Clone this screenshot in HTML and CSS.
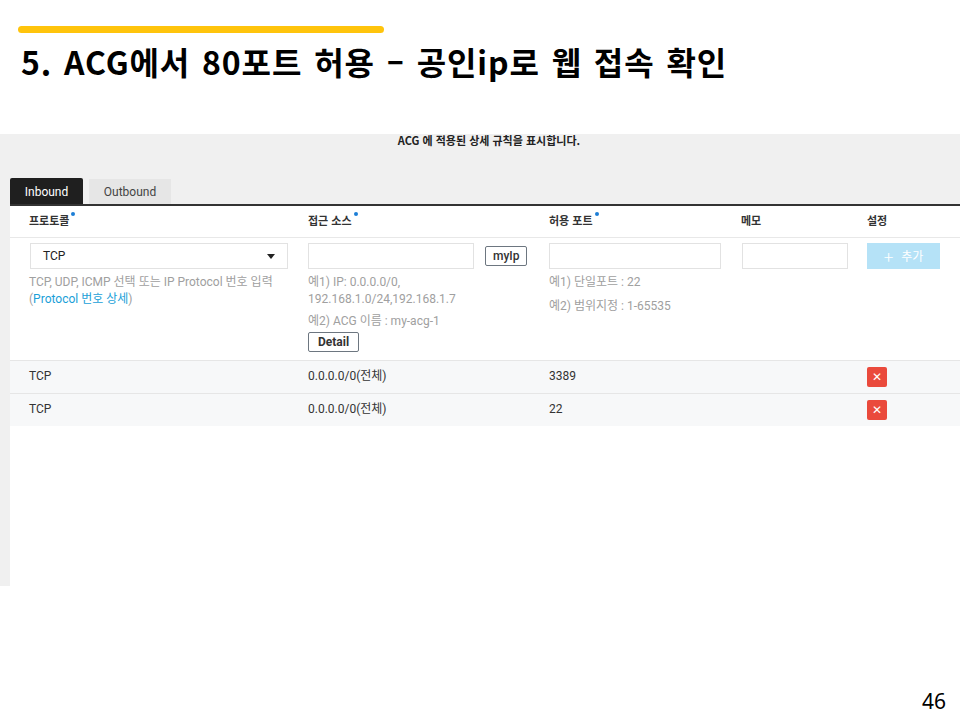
FILE: index.html
```html
<!DOCTYPE html>
<html lang="ko">
<head>
<meta charset="utf-8">
<link rel="stylesheet" href="styles.css">
</head>
<body>
<div class="slide">
  <div class="accent"></div>
  <h1 class="title">5. ACG에서 80포트 허용 – 공인ip로 웹 접속 확인</h1>
  <div class="shot">
    <div class="caption">ACG 에 적용된 상세 규칙을 표시합니다.</div>
    <div class="tabs">
      <div class="tab active">Inbound</div>
      <div class="tab">Outbound</div>
    </div>
    <div class="panel">
      <div class="row head">
        <div class="cell"><span class="req">프로토콜</span></div>
        <div class="cell"><span class="req">접근 소스</span></div>
        <div class="cell"><span class="req">허용 포트</span></div>
        <div class="cell">메모</div>
        <div class="cell">설정</div>
      </div>
      <div class="row form">
        <div class="cell">
          <div class="select"><span>TCP</span><span class="caret"></span></div>
          <p class="help first">TCP, UDP, ICMP 선택 또는 IP Protocol 번호 입력<br>(<span class="link">Protocol 번호 상세</span>)</p>
        </div>
        <div class="cell">
          <div class="inline">
            <div class="input src"></div>
            <div class="btn-small">myIp</div>
          </div>
          <p class="help first">예1) IP: 0.0.0.0/0,<br>192.168.1.0/24,192.168.1.7</p>
          <p class="help second">예2) ACG 이름 : my-acg-1</p>
          <div class="btn-small detail">Detail</div>
        </div>
        <div class="cell">
          <div class="input port"></div>
          <p class="help first">예1) 단일포트 : 22</p>
          <p class="help third">예2) 범위지정 : 1-65535</p>
        </div>
        <div class="cell">
          <div class="input memo"></div>
        </div>
        <div class="cell">
          <div class="btn-add"><span class="plus">+</span>추가</div>
        </div>
      </div>
      <div class="row data">
        <div class="cell">TCP</div>
        <div class="cell">0.0.0.0/0(전체)</div>
        <div class="cell">3389</div>
        <div class="cell"></div>
        <div class="cell"><span class="del">✕</span></div>
      </div>
      <div class="row data">
        <div class="cell">TCP</div>
        <div class="cell">0.0.0.0/0(전체)</div>
        <div class="cell">22</div>
        <div class="cell"></div>
        <div class="cell"><span class="del">✕</span></div>
      </div>
    </div>
  </div>
  <div class="footer">46</div>
</div>
</body>
</html>
```
FILE: styles.css
```css
* { box-sizing: border-box; }
html, body { margin: 0; padding: 0; background: #fff; }
.slide {
  width: 960px;
  height: 720px;
  overflow: hidden;
  font-family: "Noto Sans CJK KR", "Noto Sans", sans-serif;
}
.accent {
  margin: 26px 0 0 18px;
  width: 366px;
  height: 7px;
  border-radius: 4px;
  background: #ffc40c;
}
.title {
  margin: 6px 0 0 21px;
  font-size: 32px;
  line-height: 44px;
  font-weight: 700;
  color: #000;
  letter-spacing: 0.9px;
  word-spacing: 2px;
}
.shot {
  margin-top: 51px;
  height: 452px;
  background: #f0f0f0;
  padding-left: 10px;
  display: flex;
  flex-direction: column;
  font-family: Roboto, "Noto Sans CJK KR", sans-serif;
}
.caption {
  text-align: center;
  font-size: 11px;
  font-weight: 700;
  color: #222;
  line-height: 12px;
  padding-left: 8px;
  font-family: "Noto Sans CJK KR", sans-serif;
}
.tabs {
  margin-top: 32px;
  display: flex;
  gap: 6px;
  align-items: flex-end;
  border-bottom: 2px solid #333;
}
.tab {
  height: 25px;
  line-height: 26px;
  font-size: 12px;
  color: #444;
  background: #e6e6e6;
  padding: 0 14px;
  width: 82px;
  text-align: center;
}
.tab.active {
  background: #1f1f1f;
  color: #fff;
  width: 73px;
  height: 26px;
  line-height: 28px;
  border-radius: 2px 2px 0 0;
}
.panel {
  flex: 1;
  background: #fff;
}
.row {
  display: grid;
  grid-template-columns: 279px 241px 192px 126px 1fr;
  padding-left: 19px;
}
.cell { line-height: 16px; }
.row.head {
  height: 32px;
  align-items: center;
  padding-bottom: 3px;
  border-bottom: 1px solid #e8e8e8;
  font-size: 11px;
  font-weight: 700;
  color: #333;
  font-family: "Noto Sans CJK KR", sans-serif;
}
.req { position: relative; }
.req::after {
  content: "";
  position: absolute;
  right: -6px;
  top: 0px;
  width: 4px;
  height: 4px;
  border-radius: 50%;
  background: #1c7ed6;
}
.row.form {
  height: 123px;
  padding-top: 5px;
  border-bottom: 1px solid #e6e6e6;
}
.select {
  width: 258px;
  height: 26px;
  border: 1px solid #e2e2e2;
  display: flex;
  align-items: center;
  justify-content: space-between;
  padding: 0 12px 0 12px;
  font-size: 12px;
  color: #222;
  margin-left: 1px;
}
.caret {
  width: 0;
  height: 0;
  border-left: 4px solid transparent;
  border-right: 4px solid transparent;
  border-top: 5px solid #222;
}
.inline { display: flex; align-items: center; gap: 11px; }
.input {
  height: 26px;
  border: 1px solid #e2e2e2;
  background: #fff;
}
.input.src { width: 166px; }
.input.port { width: 172px; }
.input.memo { width: 106px; margin-left: 1px; }
.btn-small {
  height: 20px;
  border: 1px solid #6d7680;
  border-radius: 2px;
  font-size: 12px;
  font-weight: 500;
  color: #333;
  padding: 0 7px;
  line-height: 18px;
  display: inline-block;
}
.btn-small.detail { margin-top: 2px; padding: 0 9px; font-weight: 700; }
.help {
  margin: 0;
  font-size: 12px;
  line-height: 17px;
  color: #a0a0a0;
}
.help.first { margin-top: 5px; }
.help.second { margin-top: 5px; }
.help.third { margin-top: 7px; }
.link { color: #19a0d8; }
.btn-add {
  width: 73px;
  height: 26px;
  background: #b5e2f7;
  color: #fff;
  font-size: 12px;
  display: flex;
  align-items: center;
  justify-content: center;
  gap: 8px;
  font-family: "Noto Sans CJK KR", sans-serif;
}
.plus { font-size: 18px; line-height: 18px; font-weight: 300; }
.row.data {
  height: 33px;
  align-items: center;
  padding-bottom: 3px;
  background: #f7f8f9;
  border-bottom: 1px solid #e6e6e6;
  font-size: 12px;
  color: #333;
}
.row.data:last-child { height: 32px; border-bottom: none; }
.del {
  width: 20px;
  height: 20px;
  margin-top: 3px;
  background: #ea4a3c;
  border-radius: 2px;
  color: #fff;
  font-size: 12px;
  display: flex;
  align-items: center;
  justify-content: center;
}
.footer {
  margin-top: 102px;
  text-align: right;
  padding-right: 14px;
  font-size: 21px;
  line-height: 26px;
  color: #000;
  font-family: "Noto Sans", sans-serif;
}
```
